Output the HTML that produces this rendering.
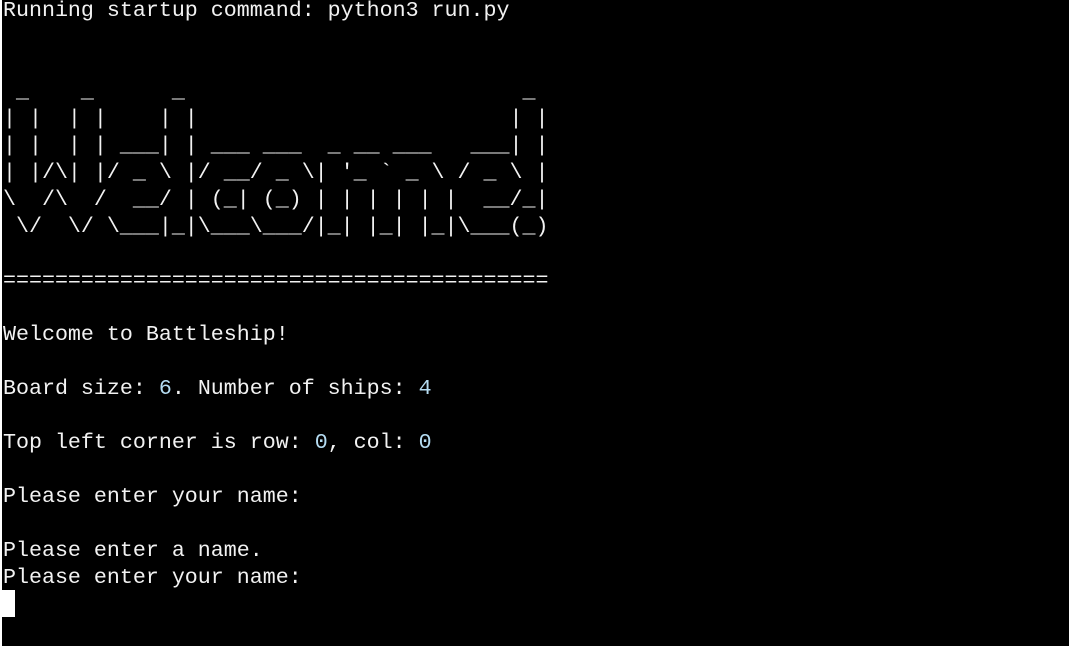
<!DOCTYPE html>
<html><head><meta charset="utf-8"><style>
html,body{margin:0;padding:0;background:#000;width:1069px;height:646px;overflow:hidden}
body{border-left:2px solid #fff;box-sizing:border-box}
pre{margin:0;position:absolute;left:3px;top:-3px;font-family:"Liberation Mono","Courier New",monospace;font-size:21.65px;line-height:27px;color:#f2f2f2}
.n{color:#b5dcf2}
.cur{position:absolute;left:2px;top:590px;width:13px;height:27px;background:#fff}
</style></head><body><pre>Running startup command: python3 run.py


 _    _      _                          _ 
| |  | |    | |                        | |
| |  | | ___| | ___ ___  _ __ ___   ___| |
| |/\| |/ _ \ |/ __/ _ \| '_ ` _ \ / _ \ |
\  /\  /  __/ | (_| (_) | | | | | |  __/_|
 \/  \/ \___|_|\___\___/|_| |_| |_|\___(_)

==========================================

Welcome to Battleship!

Board size: <span class="n">6</span>. Number of ships: <span class="n">4</span>

Top left corner is row: <span class="n">0</span>, col: <span class="n">0</span>

Please enter your name:

Please enter a name.
Please enter your name:</pre><div class="cur"></div></body></html>
